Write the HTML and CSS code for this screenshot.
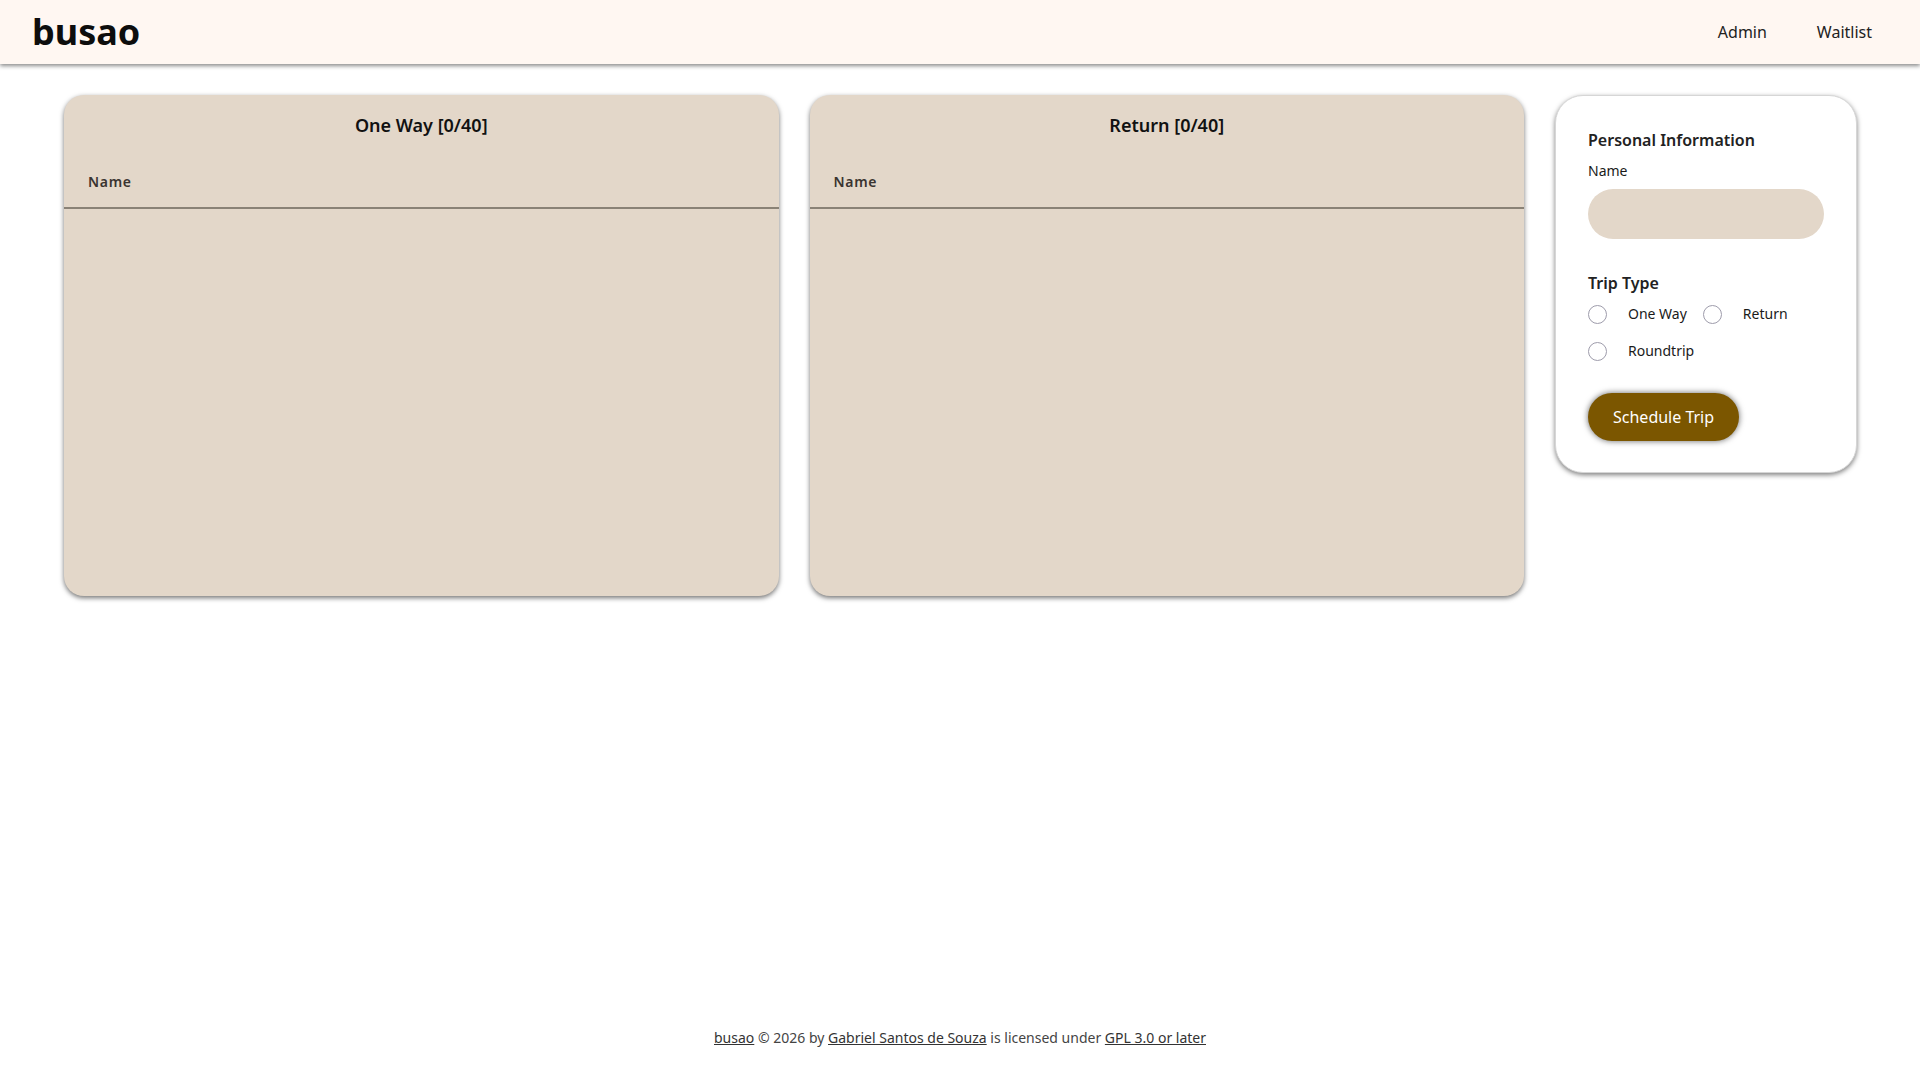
FILE: index.html
```html
<!DOCTYPE html>
<html lang="en">
<head>
<meta charset="utf-8">
<title>busao</title>
<link rel="stylesheet" href="styles.css">
</head>
<body>
<header class="topbar">
  <a class="brand" href="#">busao</a>
  <nav class="nav">
    <a href="#">Admin</a>
    <a href="#">Waitlist</a>
  </nav>
</header>
<main class="content">
  <section class="trip-card">
    <h2 class="trip-title">One Way [0/40]</h2>
    <table class="trip-table">
      <thead><tr><th>Name</th></tr></thead>
      <tbody></tbody>
    </table>
  </section>
  <section class="trip-card">
    <h2 class="trip-title">Return [0/40]</h2>
    <table class="trip-table">
      <thead><tr><th>Name</th></tr></thead>
      <tbody></tbody>
    </table>
  </section>
  <form class="form-card">
    <h3 class="form-heading">Personal Information</h3>
    <label class="field-label" for="name">Name</label>
    <input class="text-input" id="name" type="text">
    <h3 class="form-heading trip-heading">Trip Type</h3>
    <div class="radio-group">
      <label class="radio-option"><input type="radio" name="trip"><span>One Way</span></label>
      <label class="radio-option"><input type="radio" name="trip"><span>Return</span></label>
      <label class="radio-option"><input type="radio" name="trip"><span>Roundtrip</span></label>
    </div>
    <button class="submit-btn" type="button">Schedule Trip</button>
  </form>
</main>
<footer class="footer">
  <a href="#">busao</a> © 2026 by <a href="#">Gabriel Santos de Souza</a> is licensed under <a href="#">GPL 3.0 or later</a>
</footer>
</body>
</html>
```
FILE: styles.css
```css
* { box-sizing: border-box; }
html, body { margin: 0; padding: 0; }
body {
  font-family: "Noto Sans", "Open Sans", sans-serif;
  background: #ffffff;
  color: #1a1a1a;
  min-height: 100vh;
  display: flex;
  flex-direction: column;
}
.topbar {
  height: 64px;
  background: #fff7f2;
  box-shadow: 0 2px 4px rgba(0, 0, 0, 0.45);
  display: flex;
  align-items: center;
  justify-content: space-between;
  padding: 0 24px 0 32px;
  position: relative;
  z-index: 1;
}
.brand {
  font-size: 36px;
  font-weight: 700;
  color: #0d0d0d;
  text-decoration: none;
  line-height: 1;
}
.nav { display: flex; }
.nav a {
  color: #222;
  text-decoration: none;
  font-size: 16px;
  padding: 0 24px;
}
.nav a:first-child { padding-right: 26px; }
.content {
  flex: 1;
  display: grid;
  grid-template-columns: 1fr 1fr 302px;
  column-gap: 31px;
  align-items: start;
  padding: 31px 63px 0 64px;
}
.trip-card {
  background: #e3d7c9;
  border-radius: 20px;
  height: 501px;
  box-shadow: 0 2px 5px rgba(0, 0, 0, 0.55);
  overflow: hidden;
}
.trip-title {
  margin: 0;
  padding: 15px 0 1px;
  text-align: center;
  font-size: 18px;
  font-weight: 600;
  line-height: 30px;
  color: #111;
}
.trip-table {
  width: 100%;
  border-collapse: collapse;
}
.trip-table th {
  text-align: left;
  font-size: 14px;
  font-weight: 600;
  letter-spacing: 0.05em;
  color: #3a3430;
  line-height: 20px;
  padding: 31px 24px 15px;
  border-bottom: 2px solid #8a8276;
}
.form-card {
  background: #ffffff;
  border: 1px solid #d6d6d6;
  border-radius: 28px;
  box-shadow: 0 2px 5px rgba(0, 0, 0, 0.5);
  padding: 31px 32px 31px;
  display: flex;
  flex-direction: column;
  align-items: flex-start;
}
.form-heading {
  margin: 0;
  font-size: 16px;
  font-weight: 600;
  line-height: 27px;
  color: #222;
}
.field-label {
  margin-top: 6px;
  font-size: 14px;
  line-height: 22px;
  color: #1a1a1a;
}
.text-input {
  margin-top: 7px;
  width: 100%;
  height: 50px;
  border: none;
  border-radius: 25px;
  background: #e3d7c9;
  padding: 0 20px;
  font: inherit;
  outline: none;
}
.trip-heading { margin-top: 31px; }
.radio-group {
  margin-top: 6px;
  display: flex;
  flex-wrap: wrap;
  column-gap: 16px;
  row-gap: 15px;
}
.radio-option {
  display: flex;
  align-items: center;
  font-size: 14px;
  line-height: 22px;
  color: #1a1a1a;
}
.radio-option input {
  appearance: none;
  -webkit-appearance: none;
  width: 19px;
  height: 19px;
  margin: 0 21px 0 0;
  border: 1px solid #9e9cab;
  border-radius: 50%;
  background: #fff;
}
.submit-btn {
  margin-top: 31px;
  height: 48px;
  padding: 0 25px;
  border: none;
  border-radius: 24px;
  background: #7b5600;
  color: #fff;
  font-family: inherit;
  font-size: 16px;
  box-shadow: 0 0 6px rgba(0, 0, 0, 0.6);
}
.footer {
  text-align: center;
  font-size: 14px;
  line-height: 20px;
  color: #444;
  padding: 32px 0 32px;
}
.footer a { color: #333; text-decoration: underline; }
```
